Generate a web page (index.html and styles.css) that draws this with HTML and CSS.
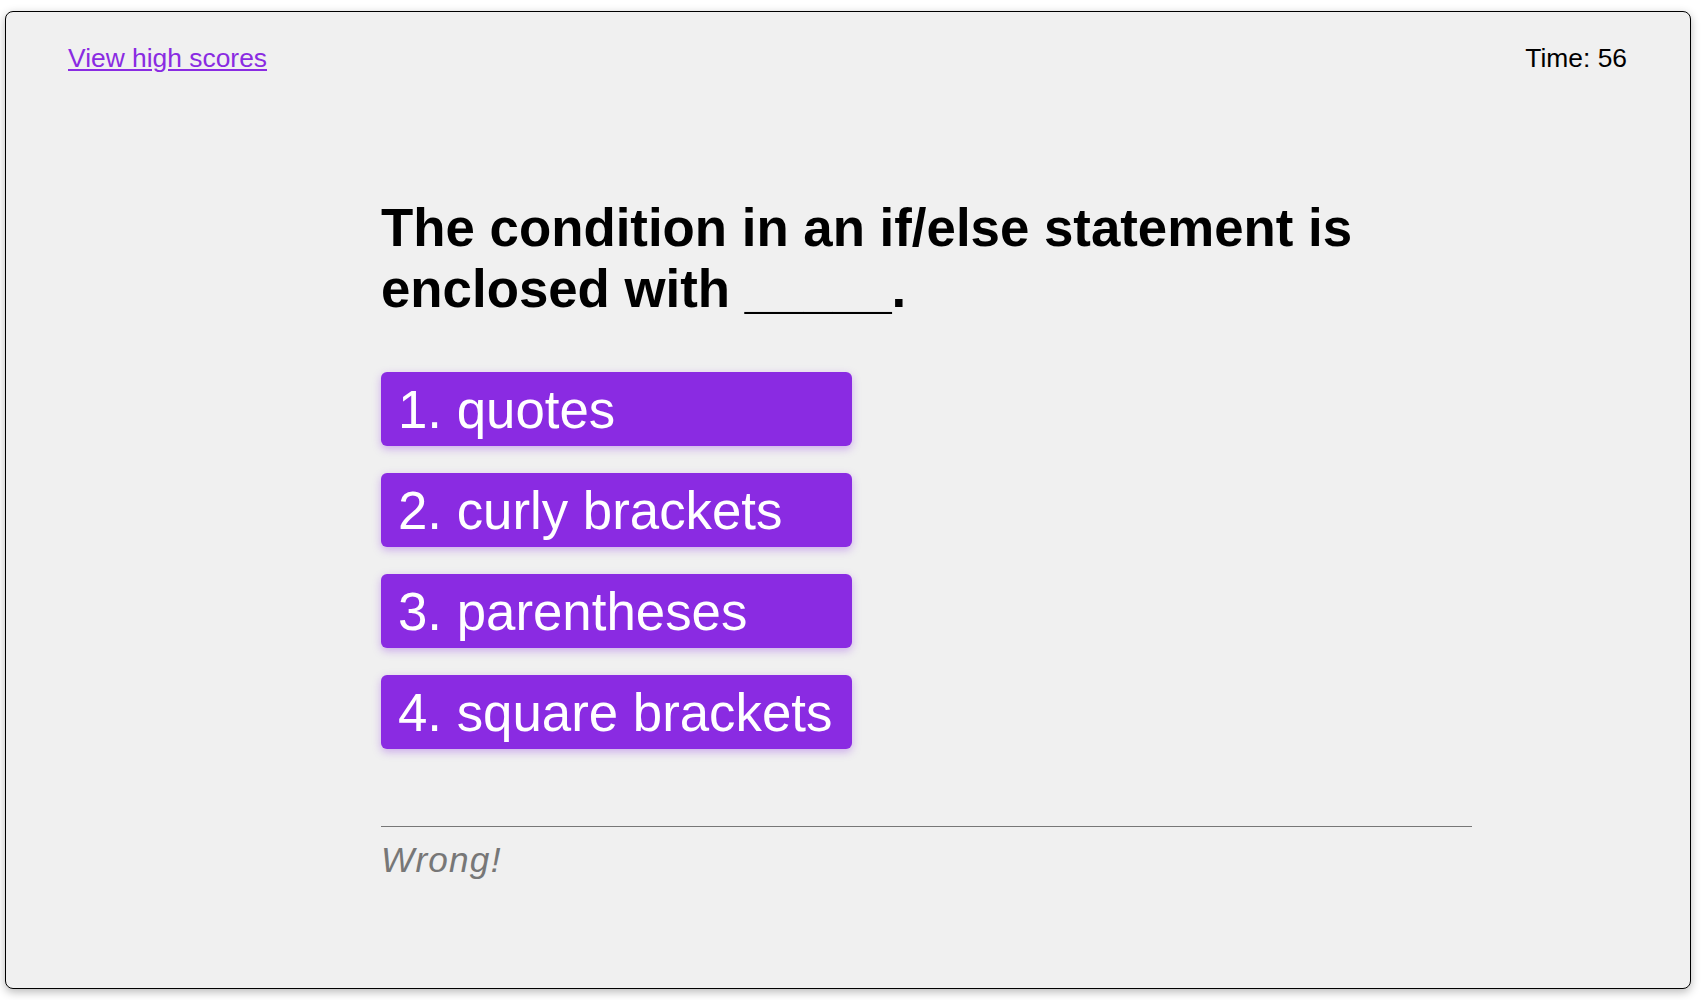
FILE: index.html
```html
<!DOCTYPE html>
<html lang="en">
<head>
<meta charset="utf-8">
<title>Code Quiz</title>
<link rel="stylesheet" href="styles.css">
</head>
<body>
<div class="frame">
  <header class="topbar">
    <a class="scores-link" href="#">View high scores</a>
    <span class="timer">Time: 56</span>
  </header>
  <main class="quiz">
    <h1 class="question">The condition in an if/else statement is enclosed with _____.</h1>
    <div class="choices">
      <button class="choice">1. quotes</button>
      <button class="choice">2. curly brackets</button>
      <button class="choice">3. parentheses</button>
      <button class="choice">4. square brackets</button>
    </div>
    <div class="feedback">
      <p class="feedback-text">Wrong!</p>
    </div>
  </main>
</div>
</body>
</html>
```

FILE: styles.css
```css
html, body {
  margin: 0;
  background: #ffffff;
}
body {
  padding: 11px 12px 11px 5px;
  font-family: Arial, "Liberation Sans", sans-serif;
}
.frame {
  box-sizing: border-box;
  height: 978px;
  border: 1px solid #000;
  border-radius: 8px;
  background: #f0f0f0;
  box-shadow: 0 3px 10px rgba(0, 0, 0, 0.28);
}
.topbar {
  display: flex;
  justify-content: space-between;
  align-items: baseline;
  padding: 31px 63px 0 62px;
  font-size: 26.4px;
  line-height: normal;
}
.scores-link {
  color: #8a2be2;
  text-decoration: underline;
}
.timer {
  color: #000;
}
.quiz {
  margin-left: 375px;
  width: 1091px;
}
.question {
  margin: 123px 0 53px;
  font-size: 52.8px;
  font-weight: bold;
  line-height: normal;
  color: #000;
}
.choices {
  display: flex;
  flex-direction: column;
  align-items: flex-start;
  gap: 27px;
}
.choice {
  box-sizing: border-box;
  width: 471px;
  height: 74px;
  padding: 0 17px;
  border: none;
  border-radius: 6px;
  background: #8a2be2;
  color: #fff;
  font-family: Arial, "Liberation Sans", sans-serif;
  font-size: 52.8px;
  line-height: normal;
  text-align: left;
  box-shadow: 0 3px 9px rgba(138, 43, 226, 0.35);
  cursor: pointer;
  white-space: nowrap;
}
.feedback {
  margin-top: 77px;
  border-top: 1px solid #777;
}
.feedback-text {
  margin: 13px 0 0;
  font-size: 35.2px;
  font-style: italic;
  letter-spacing: 1.2px;
  color: #777;
  line-height: normal;
}
```
